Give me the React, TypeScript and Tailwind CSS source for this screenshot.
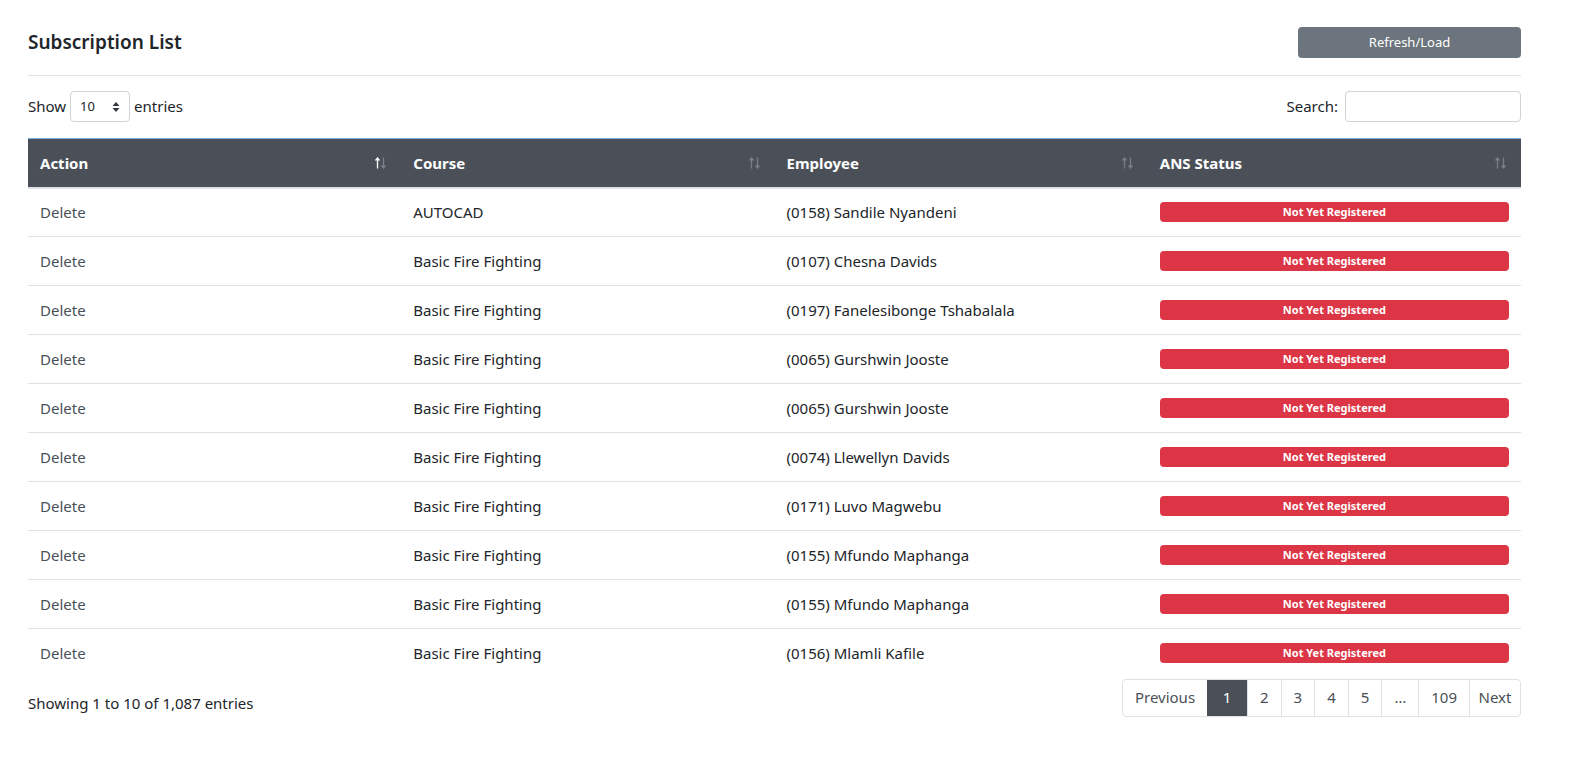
import { useState } from "react";

type Row = { course: string; employee: string };

const rows: Row[] = [
  { course: "AUTOCAD", employee: "(0158) Sandile Nyandeni" },
  { course: "Basic Fire Fighting", employee: "(0107) Chesna Davids" },
  { course: "Basic Fire Fighting", employee: "(0197) Fanelesibonge Tshabalala" },
  { course: "Basic Fire Fighting", employee: "(0065) Gurshwin Jooste" },
  { course: "Basic Fire Fighting", employee: "(0065) Gurshwin Jooste" },
  { course: "Basic Fire Fighting", employee: "(0074) Llewellyn Davids" },
  { course: "Basic Fire Fighting", employee: "(0171) Luvo Magwebu" },
  { course: "Basic Fire Fighting", employee: "(0155) Mfundo Maphanga" },
  { course: "Basic Fire Fighting", employee: "(0155) Mfundo Maphanga" },
  { course: "Basic Fire Fighting", employee: "(0156) Mlamli Kafile" },
];

const columns = ["Action", "Course", "Employee", "ANS Status"];

// datatables-style up/down arrows
function SortIcon({ active }: { active?: boolean }) {
  const dim = "#7a7f86";
  return (
    <svg width="11" height="12" viewBox="0 0 11 12" className="mr-[3px]">
      <path d="M2.5 11.5 V1.5 M0.5 3.5 L2.5 1 L4.5 3.5" stroke={active ? "#fff" : dim} strokeWidth="1.3" fill="none" />
      <path d="M8.5 0.5 V10.5 M6.5 8.5 L8.5 11 L10.5 8.5" stroke={dim} strokeWidth="1.3" fill="none" />
    </svg>
  );
}

export default function App() {
  const [search, setSearch] = useState("");
  const pages = ["1", "2", "3", "4", "5", "…", "109"];

  return (
    <div
      className="min-h-screen bg-white text-[#212529]"
      style={{ fontFamily: '"Segoe UI", "Noto Sans", sans-serif' }}
    >
      <div className="ml-[28px] mr-[55px] pt-[27px]">
        <div className="flex items-center justify-between">
          <h4 className="text-[19px] font-semibold leading-none">Subscription List</h4>
          <button className="w-[223px] h-[31px] rounded bg-[#6c757d] text-white text-[13px]">
            Refresh/Load
          </button>
        </div>
        <div className="mt-[17px] border-t border-[#e2e3e5]" />

        <div className="mt-[15px] flex items-center justify-between text-[15px]">
          <label className="flex items-center gap-[4px]">
            Show
            <span className="flex items-center justify-between w-[60px] h-[31px] border border-[#ced4da] rounded px-[9px] text-[13px]">
              10
              <svg width="8" height="12" viewBox="0 0 8 12">
                <path d="M4 1 L7.5 5 H0.5 Z M4 11 L7.5 7 H0.5 Z" fill="#343a40" />
              </svg>
            </span>
            entries
          </label>
          <label className="flex items-center gap-[7px]">
            Search:
            <input
              value={search}
              onChange={(e) => setSearch(e.target.value)}
              className="w-[176px] h-[31px] border border-[#ced4da] rounded outline-none px-2"
            />
          </label>
        </div>

        <table className="mt-[16px] w-full table-fixed border-collapse text-[15px]">
          <thead>
            <tr className="bg-[#4b5058] text-white border-t border-[#7ab2e6] border-b-2 border-b-[#dee2e6]">
              {columns.map((c, i) => (
                <th key={c} className="h-[49px] px-[12px] text-left font-bold">
                  <div className="flex items-center justify-between">
                    <span>{c}</span>
                    <SortIcon active={i === 0} />
                  </div>
                </th>
              ))}
            </tr>
          </thead>
          <tbody>
            {rows.map((r, i) => (
              <tr key={i} className={i < rows.length - 1 ? "border-b border-[#dee2e6]" : ""}>
                <td className="h-[49px] px-[12px] text-[#495057]">Delete</td>
                <td className="px-[12px]">{r.course}</td>
                <td className="px-[12px]">{r.employee}</td>
                <td className="px-[12px]">
                  <div className="h-[20px] rounded bg-[#dc3545] text-white text-[11px] font-bold flex items-center justify-center">
                    Not Yet Registered
                  </div>
                </td>
              </tr>
            ))}
          </tbody>
        </table>

        <div className="flex items-start justify-between text-[15px]">
          <span className="pt-[14px]">Showing 1 to 10 of 1,087 entries</span>
          <div className="mt-[1px] flex h-[38px] border border-[#dee2e6] rounded text-[#495057]">
            <span className="w-[84px] flex items-center justify-center">Previous</span>
            {pages.map((p) => (
              <span
                key={p}
                className={
                  p === "1"
                    ? "w-[40px] flex items-center justify-center bg-[#4b5058] text-white"
                    : "px-[12px] flex items-center justify-center border-l border-[#dee2e6]"
                }
              >
                {p}
              </span>
            ))}
            <span className="w-[51px] flex items-center justify-center border-l border-[#dee2e6]">Next</span>
          </div>
        </div>
      </div>
    </div>
  );
}
